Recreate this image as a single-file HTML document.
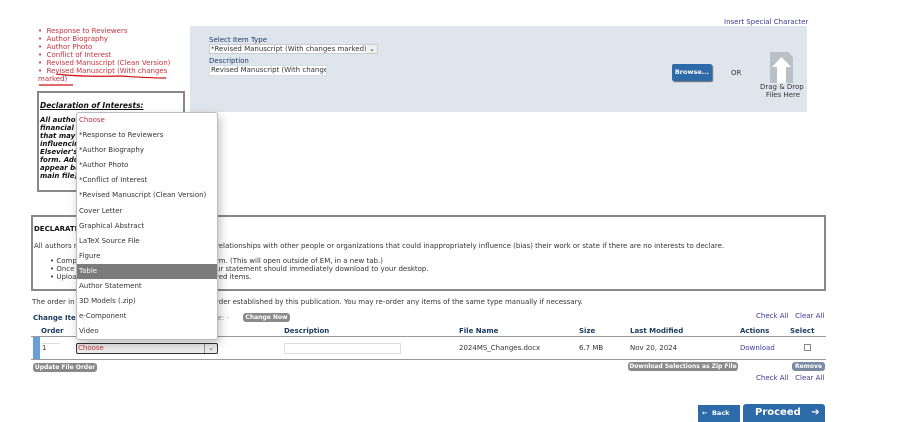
<!DOCTYPE html>
<html><head><style>
*{margin:0;padding:0;box-sizing:border-box}
body{width:900px;height:422px;background:#fff;position:relative;overflow:hidden;font-family:"DejaVu Sans",Verdana,sans-serif;font-size:7px;color:#333}
.a{position:absolute;white-space:nowrap}
.red{color:#c8323c}
.lnk{color:#3a3a9a}
.b{font-weight:bold}
.btn{position:absolute;background:#8a8a8a;color:#fff;font-weight:bold;border-radius:3px;font-size:6px;text-align:center;line-height:9px;height:9px;white-space:nowrap;overflow:hidden}
.dd div{height:15.1px;line-height:15px;padding-left:2px;font-size:7px;color:#333}
</style></head><body>
<div class="a red" style="left:38px;top:27px;line-height:8px;font-size:7px">
• &nbsp;Response to Reviewers<br>• &nbsp;Author Biography<br>• &nbsp;Author Photo<br>• &nbsp;Conflict of Interest<br>• &nbsp;Revised Manuscript (Clean Version)<br>• &nbsp;Revised Manuscript (With changes<br>marked)</div>
<svg class="a" style="left:0;top:0" width="200" height="90"><path d="M56 74 Q80 77 120 76 Q150 78 166 78" stroke="#d01010" stroke-width="1.2" fill="none"/><path d="M39 85 L73 85" stroke="#d01010" stroke-width="1.2"/></svg>
<div class="a" style="left:37px;top:91px;width:148px;height:101px;border:2px solid #888"></div>
<div class="a b" style="left:40px;top:101px;font-style:italic;text-decoration:underline;font-size:7.5px;color:#111">Declaration of Interests:</div>
<div class="a b" style="left:40px;top:116px;font-style:italic;line-height:8px;color:#111">All author<br>financial<br>that may<br>influencin<br>Elsevier's<br>form. Add<br>appear be<br>main file)</div>
<div class="a" style="left:190px;top:26px;width:617px;height:86px;background:#dfe5ec"></div>
<div class="a lnk" style="left:724px;top:18px">Insert Special Character</div>
<div class="a" style="left:209px;top:36px;color:#1a3a6a">Select Item Type</div>
<div class="a" style="left:209px;top:44px;width:169px;height:10px;background:#fff;border:1px solid #ccc;line-height:8px;padding-left:1px">*Revised Manuscript (With changes marked) <span style="position:absolute;right:0;top:0;width:10px;height:8px;background:#eee;text-align:center">⌄</span></div>
<div class="a" style="left:209px;top:57px;color:#1a3a6a">Description</div>
<div class="a" style="left:209px;top:65px;width:118px;height:11px;background:#fff;border:1px solid #ddd;line-height:9px;padding-left:1px;overflow:hidden">Revised Manuscript (With change</div>
<div class="a" style="left:672px;top:64px;width:40px;height:17px;background:#2d6aa8;border-radius:2px;color:#fff;font-weight:bold;line-height:17px;text-align:center;box-shadow:1px 1px 1px #666;font-size:6.5px">Browse...</div>
<div class="a" style="left:731px;top:69px">OR</div>
<svg class="a" style="left:770px;top:52px" width="24" height="31"><path d="M0 0 H18 L23 5 V31 H0Z" fill="#b8c0c8"/><path d="M11.5 5 L21 15 H16 V31 H7 V15 H2Z" fill="#fff"/></svg>
<div class="a" style="left:760px;top:83px;text-align:center;line-height:8px">Drag &amp; Drop<br>&nbsp;Files Here</div>
<div class="a" style="left:31px;top:215px;width:795px;height:76px;border:2px solid #888"></div>
<div class="a b" style="left:34px;top:225px;color:#111">DECLARATI</div>
<div class="a" style="left:34px;top:242px">All authors r</div>
<div class="a" style="left:216px;top:242px">relationships with other people or organizations that could inappropriately influence (bias) their work or state if there are no interests to declare.</div>
<div class="a" style="left:50px;top:257px;line-height:8px">• Comp<br>• Once<br>• Uploa</div>
<div class="a" style="left:216px;top:257px;line-height:8px">rm. (This will open outside of EM, in a new tab.)<br>ur statement should immediately download to your desktop.<br>red items.</div>
<div class="a" style="left:32px;top:298px">The order in</div>
<div class="a" style="left:216px;top:298px">rder established by this publication. You may re-order any items of the same type manually if necessary.</div>
<div class="a lnk" style="left:756px;top:312px">Check All &nbsp;&nbsp;Clear All</div>
<div class="a b" style="left:33px;top:314px;color:#1a3a5c">Change Ite</div>
<div class="a" style="left:214px;top:314px;color:#999">se: -</div>
<div class="btn" style="left:243px;top:313px;width:47px">Change Now</div>
<div class="a b" style="left:41px;top:327px;color:#1a3a5c">Order</div>
<div class="a b" style="left:284px;top:327px;color:#1a3a5c">Description</div>
<div class="a b" style="left:459px;top:327px;color:#1a3a5c">File Name</div>
<div class="a b" style="left:579px;top:327px;color:#1a3a5c">Size</div>
<div class="a b" style="left:630px;top:327px;color:#1a3a5c">Last Modified</div>
<div class="a b" style="left:740px;top:327px;color:#1a3a5c">Actions</div>
<div class="a b" style="left:790px;top:327px;color:#1a3a5c">Select</div>
<div class="a" style="left:31px;top:336px;width:795px;height:1px;background:#999"></div>
<div class="a" style="left:33px;top:337px;width:7px;height:22px;background:#6a9fd8"></div>
<div class="a" style="left:42px;top:343px;width:18px;height:10px;border-top:1px solid #ddd">1</div>
<div class="a red" style="left:76px;top:343px;width:142px;height:11px;border:1px solid #333;border-radius:2px;background:#eee;line-height:9px;padding-left:1px">Choose<span style="position:absolute;right:0;top:0;width:13px;height:9px;border-left:1px solid #999;color:#555;text-align:center">⌄</span></div>
<div class="a" style="left:284px;top:343px;width:117px;height:11px;border:1px solid #ddd"></div>
<div class="a" style="left:459px;top:344px">2024MS_Changes.docx</div>
<div class="a" style="left:579px;top:344px">6.7 MB</div>
<div class="a" style="left:630px;top:344px">Nov 20, 2024</div>
<div class="a lnk" style="left:740px;top:344px">Download</div>
<div class="a" style="left:804px;top:344px;width:7px;height:7px;border:1px solid #888"></div>
<div class="a" style="left:31px;top:359px;width:795px;height:1px;background:#999"></div>
<div class="btn" style="left:33px;top:363px;width:64px">Update File Order</div>
<div class="btn" style="left:628px;top:362px;width:110px">Download Selections as Zip File</div>
<div class="btn" style="left:792px;top:362px;width:33px;background:#7a8aa0">Remove</div>
<div class="a lnk" style="left:756px;top:374px">Check All &nbsp;&nbsp;Clear All</div>
<div class="a" style="left:698px;top:405px;width:42px;height:17px;background:#2d6aa8;color:#fff;font-weight:bold;font-size:6.5px;line-height:17px;padding-left:4px">← &nbsp;Back</div>
<div class="a" style="left:743px;top:404px;width:82px;height:18px;background:#2d6aa8;color:#fff;font-weight:bold;font-size:10px;line-height:18px;padding-left:12px;border-radius:3px 3px 0 0">Proceed &nbsp;&nbsp;➔</div>
<div class="a dd" style="left:76px;top:112px;width:142px;height:228px;background:#fff;border:1px solid #bbb;border-radius:3px;box-shadow:2px 4px 10px rgba(0,0,0,.25)">
<div style="color:#c8323c">Choose</div><div>*Response to Reviewers</div><div>*Author Biography</div><div>*Author Photo</div><div>*Conflict of Interest</div><div>*Revised Manuscript (Clean Version)</div><div>Cover Letter</div><div>Graphical Abstract</div><div>LaTeX Source File</div><div>Figure</div><div style="background:#7b7b7b;color:#fff">Table</div><div>Author Statement</div><div>3D Models (.zip)</div><div>e-Component</div><div>Video</div>
</div>
</body></html>
